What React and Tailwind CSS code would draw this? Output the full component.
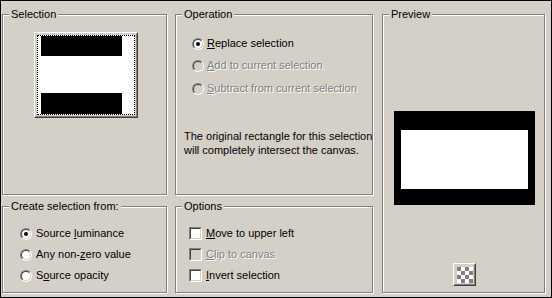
import React from 'react';

const face = 'bg-[#d4d0c8]';

// etched group box: gray line, white line inside top-left / outside bottom-right
const Group = ({ label, className = '', children }) => (
  <div className={`relative border border-[#808080] shadow-[inset_1px_1px_0_#fff,1px_1px_0_#fff] ${className}`}>
    <span className={`absolute -top-[6px] left-[6px] px-[2px] leading-[11px] ${face}`}>{label}</span>
    {children}
  </div>
);

const Radio = ({ checked, disabled }) => (
  <div className="w-[12px] h-[12px] shrink-0 rounded-full border border-t-[#808080] border-l-[#808080] border-b-white border-r-white">
    <div className={`w-full h-full rounded-full border border-t-[#404040] border-l-[#404040] border-b-[#d4d0c8] border-r-[#d4d0c8] flex items-center justify-center ${disabled ? face : 'bg-white'}`}>
      {checked && <div className="w-[4px] h-[4px] rounded-full bg-black" />}
    </div>
  </div>
);

const Check = ({ disabled }) => (
  <div className="w-[13px] h-[13px] shrink-0 border border-t-[#808080] border-l-[#808080] border-b-white border-r-white">
    <div className={`w-full h-full border border-t-[#404040] border-l-[#404040] border-b-[#d4d0c8] border-r-[#d4d0c8] ${disabled ? face : 'bg-white'}`} />
  </div>
);

// label with an underlined access key
const Label = ({ pre = '', k, post, disabled }) => (
  <span className={`leading-[13px] whitespace-nowrap ${disabled ? 'text-[#808080] [text-shadow:1px_1px_0_#fff]' : ''}`}>
    {pre}<u className="underline-offset-[1px]">{k}</u>{post}
  </span>
);

const CheckerIcon = () => (
  <svg width="16" height="16" viewBox="0 0 16 16">
    {[0, 1, 2, 3].map((r) =>
      [0, 1, 2, 3].map((c) => (
        <rect key={`${r}-${c}`} x={c * 4} y={r * 4} width="4" height="4" fill={(r + c) % 2 === 0 ? '#808080' : '#ffffff'} />
      ))
    )}
  </svg>
);

export default function App() {
  return (
    <div
      className={`w-[552px] h-[298px] border border-black ${face} text-[11px] text-black`}
      style={{ fontFamily: '"Liberation Sans", Arial, sans-serif' }}
    >
      <div className="flex pl-px pt-[13px]">
        {/* left column */}
        <div className="flex flex-col gap-[11px] w-[165px]">
          <Group label="Selection" className="h-[181px]">
            <div className="flex justify-center pt-[17px] pl-[2px]">
              <div className="w-[104px] h-[86px] border border-t-white border-l-white border-b-[#404040] border-r-[#404040]">
                <div className="w-full h-full border border-t-[#d4d0c8] border-l-[#d4d0c8] border-b-[#808080] border-r-[#808080] p-px">
                  <div className="w-full h-full border border-dotted border-black bg-white pl-[3px] pr-[12px] flex flex-col justify-between">
                    <div className="h-[20px] bg-black" />
                    <div className="h-[21px] bg-black" />
                  </div>
                </div>
              </div>
            </div>
          </Group>
          <Group label="Create selection from:" className="h-[87px]">
            <div className="flex flex-col gap-[8px] pt-[20px] pl-[17px]">
              <div className="flex items-center gap-[4px]">
                <Radio checked />
                <Label pre="Source " k="l" post="uminance" />
              </div>
              <div className="flex items-center gap-[4px]">
                <Radio />
                <Label pre="Any non-" k="z" post="ero value" />
              </div>
              <div className="flex items-center gap-[4px]">
                <Radio />
                <Label pre="S" k="o" post="urce opacity" />
              </div>
            </div>
          </Group>
        </div>

        {/* middle column */}
        <div className="flex flex-col gap-[11px] w-[198px] ml-[8px]">
          <Group label="Operation" className="h-[181px]">
            <div className="flex flex-col pt-[22px] pl-[16px]">
              <div className="flex items-center gap-[3px]">
                <Radio checked />
                <Label k="R" post="eplace selection" />
              </div>
              <div className="flex items-center gap-[3px] mt-[9px]">
                <Radio disabled />
                <Label k="A" post="dd to current selection" disabled />
              </div>
              <div className="flex items-center gap-[3px] mt-[10px]">
                <Radio disabled />
                <Label k="S" post="ubtract from current selection" disabled />
              </div>
            </div>
            <p className="pl-[8px] mt-[34px] leading-[14px] whitespace-nowrap">
              The original rectangle for this selection
              <br />
              will completely intersect the canvas.
            </p>
          </Group>
          <Group label="Options" className="h-[87px]">
            <div className="flex flex-col gap-[8px] pt-[20px] pl-[13px]">
              <div className="flex items-center gap-[4px]">
                <Check />
                <Label k="M" post="ove to upper left" />
              </div>
              <div className="flex items-center gap-[4px]">
                <Check disabled />
                <Label k="C" post="lip to canvas" disabled />
              </div>
              <div className="flex items-center gap-[4px]">
                <Check />
                <Label k="I" post="nvert selection" />
              </div>
            </div>
          </Group>
        </div>

        {/* preview */}
        <Group label="Preview" className="w-[163px] h-[279px] ml-[9px]">
          <div className="flex flex-col items-center pl-[2px]">
            <div className="mt-[96px] w-[141px] h-[94px] bg-black pt-[19px] pb-[16px] px-[7px]">
              <div className="w-full h-full bg-white" />
            </div>
            <button className="mt-[58px] w-[23px] h-[23px] border border-t-white border-l-white border-b-[#404040] border-r-[#404040]">
              <div className="w-full h-full border border-t-[#d4d0c8] border-l-[#d4d0c8] border-b-[#808080] border-r-[#808080] flex items-center justify-center">
                <CheckerIcon />
              </div>
            </button>
          </div>
        </Group>
      </div>
    </div>
  );
}
